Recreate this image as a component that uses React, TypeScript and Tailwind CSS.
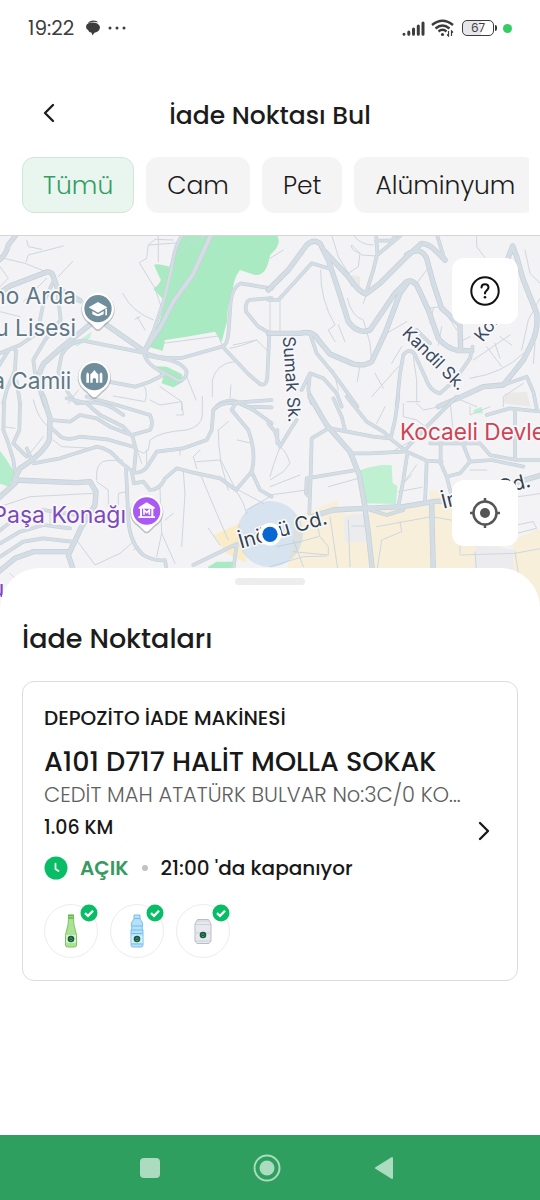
import { ChevronLeft, ChevronRight } from "lucide-react";

const filters = ["Tümü", "Cam", "Pet", "Alüminyum"];

// Streets are drawn per map tile (810 x 540 units), widest first
const tiles = [
  {
    x: 0,
    y: 0,
    wide: [
      "M635 10L578 135L520 215L482 290L432 365",
      "M320 285L430 362",
      "M300 260L190 348L132 400Q112 430 118 470L138 530",
      "M-10 195L30 168L140 126Q156 124 160 140L172 175L240 212",
      "M-10 95Q18 78 25 45L50 12",
    ],
    mid: [
      "M550 10Q522 50 516 110L492 210L462 300L436 355",
      "M430 368L250 332Q205 335 185 375L175 425L205 490L230 520",
      "M430 365Q475 388 545 384L665 350Q684 345 686 300L692 215Q698 170 722 160L815 176",
      "M668 350L745 432L780 462Q800 470 802 440L808 310",
      "M815 204L748 210Q734 218 738 245L775 290L815 312",
      "M432 370Q440 405 492 428L535 452Q560 448 560 425Q550 400 500 388L445 378",
      "M325 455L405 470L450 455L490 435",
      "M162 150L130 220L112 310L60 345L0 370",
      "M172 180L182 270L135 330L100 390L110 470",
      "M-5 410L20 370Q32 345 48 362L45 420L20 480L10 520",
      "M230 520Q300 510 340 535L370 555",
      "M640 540Q660 510 700 512L740 530L815 532",
      "M50 455L60 520",
    ],
    thin: [
      "M12 85L75 100L130 122M218 94L175 140",
      "M80 30L85 50L125 58M78 95L85 75L190 48M0 110L25 145L0 170",
      "M475 15V95M540 38L445 45L440 85L418 98L465 175L485 235M445 45L465 28L520 30",
      "M368 190Q395 245 460 270M412 260L435 300M420 260L405 268",
      "M620 15L560 45L520 85",
      "M490 340L655 318L668 350M560 440L588 510M480 470L545 515V540",
      "M702 395Q650 400 637 450V500M770 330Q720 350 690 355M810 370L770 330L700 345",
      "M693 465L690 505M340 498L435 515Q445 480 430 466M235 480L205 520",
      "M140 145L70 215M0 245L60 260",
    ],
  },
  {
    x: 810,
    y: 0,
    wide: [
      "M-5 180L55 120L110 45Q130 25 150 40L175 90L205 180L235 275Q265 315 300 300L375 190L410 155Q425 148 440 165L475 240L505 325Q530 355 565 362L605 362",
      "M165 65L235 140Q265 185 288 192L330 160L410 80L455 40Q480 42 500 65L525 90",
      "M-5 310H90Q130 300 145 330L180 372L250 402Q280 410 305 395L345 310L390 190L415 155",
      "M505 530L575 500L640 470L700 465L760 390L785 340Q805 300 800 250L760 150L740 80L728 48L712 90",
      "M410 75Q450 45 470 85L490 160L515 235L570 285L572 362",
    ],
    mid: [
      "M-5 210H25L80 150L125 100L175 115",
      "M318 10L322 70L310 120L288 190M322 75L400 10M318 32H365L380 12",
      "M500 12L525 92",
      "M120 310L140 370L190 430L262 530",
      "M380 530L390 430L400 375Q420 350 435 375L465 440Q480 485 510 490L555 450L600 385L608 350",
      "M700 465L770 440L790 485L800 535",
      "M95 480L120 430L160 445L200 490L215 530M120 430L115 480L125 520",
      "M440 300L480 340",
    ],
    thin: [
      "M185 15L205 80L235 130L265 110L270 70Q240 60 245 45L275 75L320 78M250 15Q270 45 310 45",
      "M0 210V310M30 210V305M152 120Q150 210 195 285L175 300L195 335",
      "M232 205Q245 260 280 270L300 340L305 395M205 285L225 335",
      "M620 15V50L650 90M765 60L780 130L810 160M810 205L775 270L755 360",
      "M470 235L515 230L560 300M505 345L515 290",
      "M270 405L262 455M385 410L305 500M340 475L315 430M410 515H450M430 380L440 450V515",
      "M365 400L395 350M650 350L695 410M610 390L720 315M675 340L690 385M725 345L690 320",
      "M795 340L790 400M600 445Q700 430 760 370M700 530V500L760 460",
      "M190 420L205 480M490 235L480 280M350 310L410 275",
      "M280 220L290 190M440 160L470 120M580 330L600 320",
      "M0 85L40 60M560 505L620 530",
    ],
  },
  {
    x: 0,
    y: 510,
    wide: [
      "M130 -10L150 55L148 120Q130 160 60 205L42 240L230 248L270 245L288 275L285 315L245 380L205 465L220 510",
      "M-10 520L45 475L100 455H205",
      "M45 250L-10 300",
    ],
    mid: [
      "M200 -5L260 10L300 45L370 80L398 110L408 150L402 215",
      "M150 60L210 65L240 45L290 55L330 80L395 105L450 90Q462 70 450 45L350 15L260 -10",
      "M155 85L185 112Q210 122 240 110L320 118L400 140",
      "M80 145L100 190L180 175L290 140Q330 145 360 185L402 218Q430 220 445 195L470 155L550 145L620 120L635 90L640 30Q660 5 710 8L815 0",
      "M12 10L10 90L25 130L40 180L45 215",
      "M60 15L58 90L40 130L80 170",
      "M378 205L385 360Q390 430 430 465Q465 485 495 480L500 510",
      "M395 215L402 250L430 245L450 270Q480 270 495 235L530 205L580 218L660 235L708 270L755 215Q770 160 745 90L695 30L710 5",
      "M0 430L60 395L130 375L210 385M0 470L70 425L130 415L215 425",
      "M-5 395L45 355L130 330L260 350",
      "M710 5L760 30L815 70M755 215L780 270L815 290",
      "M580 495L710 432L700 510",
    ],
    thin: [
      "M100 0Q115 60 145 80M10 80L45 85M90 160L130 110M0 320L90 290L280 280",
      "M290 240Q285 185 320 182L368 180M290 245L325 270V320L355 315V280L380 275",
      "M160 120L185 140L280 145M410 150L430 160L445 150L450 120Q480 95 560 90Q605 80 607 45V-10",
      "M450 0L480 15L545 5L550 45H530M600 150L580 170L590 205M590 185L660 180L685 270",
      "M655 90Q655 140 662 180L708 270M655 90L685 65M712 120L755 130M540 150V165",
      "M480 265L485 400L470 470M485 400L525 490M485 395M555 280L550 215M555 280L545 440",
      "M600 220L650 340L685 420M625 385L660 435M708 270L730 310L740 340",
      "M230 420L285 495L360 460L395 430M400 450L415 440M415 160L425 190M520 340L495 360",
      "M440 190V150M150 330V375M810 290L740 330M715 270L790 310",
      "M30 520L50 540",
    ],
  },
  {
    x: 810,
    y: 510,
    wide: [
      "M130 348L190 330L280 325L400 320L490 305L560 300L815 225",
      "M285 325L295 400L308 520",
      "M485 315L490 520",
      "M120 -10L170 75L240 155L268 225L285 320",
    ],
    mid: [
      "M190 -5L215 50L225 90M180 85L310 110L360 115L410 155L470 182L515 185",
      "M230 -10L290 65L340 95L362 115L375 60L385 -10",
      "M175 85L125 115L122 230L118 340M110 235L260 210M110 235L108 280L118 290",
      "M240 160L300 160L400 155L470 80L560 -10",
      "M412 160L400 240L385 320M470 185L465 310",
      "M512 130V190L530 230L545 290",
      "M480 130H630L660 165L740 180L815 180M580 135L600 185L570 220L530 230M600 185L665 180L760 200",
      "M720 25L815 35M735 30V180M720 25L650 45",
      "M-5 70L15 95L30 140L60 90L80 60M22 90V130",
      "M285 325L350 345L400 330",
    ],
    thin: [
      "M0 240L40 215L60 190Q50 155 30 140L12 190L0 230",
      "M0 285L110 270M0 260L90 225M175 260L265 235M385 275L455 262",
      "M440 195L400 250L425 225M345 20L320 70M400 10V50L440 60L480 90M375 150L430 120L490 60",
      "M135 350L150 410L175 440L175 465L70 455M180 350L205 520M0 500L100 470L170 468",
      "M20 440L90 425L145 410M235 360L240 500M245 378H290M320 520L335 420L395 395L390 365",
      "M320 380L485 350L570 365M570 370L570 460",
      "M570 465L735 460L815 445M615 455L620 520M735 455L745 520",
      "M600 20V45L660 20M540 0L550 100",
      "M740 375L790 365L800 385L740 400M745 290L815 280M70 420L100 500",
      "M440 10L460 30L510 20M600 210H650",
    ],
  },
];

const StreetMap = () => (
  <svg
    viewBox="0 18 1620 1122"
    preserveAspectRatio="xMidYMin slice"
    className="block h-full w-full font-['Inter','Liberation_Sans',sans-serif]"
    role="img"
    aria-label="Harita"
  >
    <rect width="1620" height="1140" fill="#f3f2f4" />

    {/* parks */}
    <g fill="#a9eac2">
      <path d="M545 15H830Q850 40 810 75Q800 140 765 135L720 120Q700 145 697 190Q680 230 682 270L665 335L645 305L560 320L495 330L488 362L445 350L480 270L492 210L460 178Q490 150 480 145L462 105Q470 98 508 110L520 70Z" />
      <path d="M455 408L500 410L545 432L550 455L520 472L485 460L490 440Z" />
      <path d="M-5 655L20 690L45 730L28 770L-5 760Z" fill="#b4edcb" />
      <path d="M1078 722Q1130 702 1175 706L1178 760L1192 768L1188 822L1100 820L1088 780Z" fill="#bff0d2" />
      <path d="M625 1010L650 995H700L690 1030H620Z" />
      <path d="M225 340L275 305L270 325L230 350Z" fill="#c9f0d9" />
      <path d="M1420 540L1445 530L1448 550H1422Z" fill="#bff0d2" />
    </g>
    <path d="M1055 135L1080 140V175L1050 170ZM1515 490L1580 485L1592 530L1510 520Z" fill="#ebe9e8" />

    {/* commercial blocks */}
    <g fill="#f8efdb">
      <path d="M890 860L1010 810L1025 850H1100L1110 1030H860Z" />
      <path d="M1110 840L1270 830L1370 845V1030H1120L1105 880Z" />
      <path d="M1290 780L1330 790L1500 820V945L1540 1030H1290Z" />
      <path d="M1540 930L1630 890V1140H1540Z" />
      <path d="M640 915L720 880L740 1000L680 970Z" fill="#fbecc8" />
    </g>
    <path d="M1030 860L1095 850L1100 935H1035ZM1430 940L1540 960V1030H1420Z" fill="#ececee" />

    {tiles.map((tile) => (
      <g key={`${tile.x}-${tile.y}`} transform={`translate(${tile.x} ${tile.y})`} fill="none" strokeLinecap="round" strokeLinejoin="round">
        <path d={tile.thin.join("")} stroke="#ced7df" strokeWidth="3" />
        <path d={tile.mid.join("")} stroke="#c3cfd9" strokeWidth="11" />
        <path d={tile.wide.join("")} stroke="#c3cfd9" strokeWidth="16" />
        <path d={tile.mid.join("")} stroke="#d4dde4" strokeWidth="8" />
        <path d={tile.wide.join("")} stroke="#d4dde4" strokeWidth="12" />
      </g>
    ))}

    {/* accuracy radius */}
    <circle cx="810" cy="912" r="99" fill="#9fc5ea" fillOpacity="0.32" />

    {/* labels */}
    <g strokeLinejoin="round" stroke="#f8f8fa" strokeWidth="10" paintOrder="stroke">
      <g fill="#5f7886" fontSize="68" textAnchor="end">
        <text x="228" y="222">no Arda</text>
        <text x="228" y="318">u Lisesi</text>
        <text x="214" y="476">a Camii</text>
      </g>
      <text x="378" y="878" fill="#7b48bd" fontSize="69" textAnchor="end">Paşa Konağı</text>
      <text x="-28" y="1100" fill="#7b48bd" fontSize="69">u</text>
      <text x="1200" y="629" fill="#cf4354" fontSize="68">Kocaeli Devlet</text>
      <g fill="#3a4a5f" fontSize="52">
        <text transform="translate(848 320) rotate(86)">Sumak Sk.</text>
        <text transform="translate(1204 312) rotate(45)">Kandil Sk.</text>
        <text transform="translate(1448 338) rotate(-52)">Koru</text>
      </g>
      <g fill="#33414f" fontSize="60">
        <text transform="translate(722 956) rotate(-16)">İnönü Cd.</text>
        <text transform="translate(1330 836) rotate(-14)">İnönü Cd.</text>
      </g>
    </g>

    {/* current position */}
    <circle cx="810" cy="913" r="34" fill="#fff" />
    <circle cx="810" cy="913" r="23" fill="#0967d2" />

    {/* places */}
    <g transform="translate(294 236)">
      <Pin color="#6f8d9b" />
      <path d="M-28 -4L0 -20L28 -4L0 12Z M-17 7V17Q0 28 17 17V7L0 17Z M22 0H27V20H22Z" fill="#fff" />
    </g>
    <g transform="translate(283 440)">
      <Pin color="#6f8d9b" />
      <path d="M-24 18V-8L-20 -13L-16 -8V18Z M16 18V-8L20 -13L24 -8V18Z M-12 18V-7Q-7 -10 0 -20Q7 -10 12 -7V18H5V8Q0 0 -5 8V18Z" fill="#fff" />
    </g>
    <g transform="translate(440 843)">
      <Pin color="#aa5af2" />
      <path d="M-24 -11L0 -26L24 -11V-7H-24Z M-20 -7H-14V16H-20Z M14 -7H20V16H14Z M-25 16H25V21H-25Z" fill="#fff" />
      <path d="M-8 11V-3L0 5L8 -3V11" fill="none" stroke="#fff" strokeWidth="5" />
    </g>
  </svg>
);

const Pin = ({ color }: { color: string }) => (
  <>
    <path d="M0 67C-8 67 -14 56 -28 45A50 50 0 1 1 28 45C14 56 8 67 0 67Z" fill="#7d858c" opacity="0.45" />
    <path d="M0 62C-7 62 -13 51 -27 40A48 48 0 1 1 27 40C13 51 7 62 0 62Z" fill="#fff" />
    <circle r="41" fill={color} />
  </>
);

const StatusBar = () => (
  <div className="flex h-14 items-center justify-between px-7 text-[#3c3c3c]">
    <div className="flex items-center gap-3">
      <span className="text-xl">19:22</span>
      <svg width="14" height="16" viewBox="0 0 15 16" fill="currentColor">
        <path d="M2 3Q4 0 8 0Q12 0 13 2Q7 0 2 3ZM0 6Q1 2 7 2Q14 2 15 7Q15 12 9 13L7 16L6 13Q3 13 2 10Q0 9 0 6Z" />
      </svg>
      <svg width="18" height="4" viewBox="0 0 18 4" fill="currentColor" className="-ml-1">
        <circle cx="2" cy="2" r="1.5" />
        <circle cx="9" cy="2" r="1.5" />
        <circle cx="16" cy="2" r="1.5" />
      </svg>
    </div>
    <div className="flex items-center gap-1.5">
      <svg width="23" height="15" viewBox="0 0 23 15" stroke="currentColor" strokeWidth="3" strokeLinecap="round">
        <path d="M2 13.3V13.2M6.8 13.3V11M11.5 13.3V8M16.3 13.3V5M21 13.3V2" />
      </svg>
      <svg width="23" height="18" viewBox="0 0 23 18" fill="none" stroke="currentColor" strokeWidth="2.4">
        <path d="M1 6Q11.500 -2.500 22 6M4.500 9.500Q11.500 3.500 18.500 9.500M7.500 12.500Q11.500 9 15.500 12.500" />
        <circle cx="11.500" cy="15.500" r="1.600" fill="currentColor" stroke="none" />
        <path d="M17.500 12V17L16 15.500M20.500 17V12L22 13.500" strokeWidth="1.200" />
      </svg>
      <div className="ml-0.5 flex items-center gap-px">
        <span className="flex h-4 w-8 items-center justify-center rounded-[5px] border border-current bg-linear-to-r from-gray-200 from-60% to-white to-60% text-xs leading-none">
          67
        </span>
        <span className="h-1.5 w-0.5 rounded-r bg-current" />
      </div>
      <span className="size-[9px] rounded-full bg-[#35cb65]" />
    </div>
  </div>
);

const CheckBadge = () => (
  <svg viewBox="0 0 18 18" className="absolute -top-px -right-px size-[18px]">
    <circle cx="9" cy="9" r="8.500" fill="#08bd66" />
    <path d="M5 9.200L8 11.800L13 6.700" fill="none" stroke="#fff" strokeWidth="2.300" />
  </svg>
);

const Label = ({ y }: { y: number }) => (
  <g transform={`translate(9 ${y})`}>
    <circle r="3.300" fill="#155943" />
    <path d="M-1.600 .5L0 -1.500L1.600 .5M-1.200 1.600H1.300" fill="none" stroke="#4fae72" strokeWidth=".8" />
  </g>
);

const GlassBottle = () => (
  <svg width="18" height="34" viewBox="0 0 18 34">
    <path d="M6.500 1H11.500V5Q11.500 11 13.500 17Q14.500 20 14.500 23V31Q14.500 33 12.500 33H5.500Q3.500 33 3.500 31V23Q3.500 20 4.500 17Q6.500 11 6.500 5Z" fill="#abe394" stroke="#79c561" />
    <path d="M6 1.500H12M6.500 4H11.500" stroke="#62b84b" strokeWidth="1.500" />
    <path d="M4 21H14V29H4Z" fill="#d7f1c9" />
    <Label y={25} />
  </svg>
);

const PlasticBottle = () => (
  <svg width="18" height="34" viewBox="0 0 18 34">
    <path d="M6 1H12V5L14 8Q15 10 14.500 12L14 14L15 16V31Q15 33 13 33H5Q3 33 3 31V16L4 14L3.500 12Q3 10 4 8L6 5Z" fill="#b5e2fb" stroke="#78bfeb" />
    <path d="M6 4.500H12M4 12H14M3.500 16H14.500M3.500 19.500H14.500M4 30H14" stroke="#73baf0" />
    <path d="M3.500 21.500H14.500V29H3.500Z" fill="#d3edfa" />
    <Label y={25} />
  </svg>
);

const Can = () => (
  <svg width="18" height="34" viewBox="0 0 18 34">
    <path d="M3.500 5.500H14.500L17 10V27L15 29.500H3L1 27V10Z" fill="#e7e9ef" stroke="#b9bdc8" />
    <path d="M3 7H15M1.500 10.500H16.500M2 19H16M2 27H16" stroke="#c7cad3" strokeWidth=".8" />
    <Label y={21} />
  </svg>
);

const materials = [
  { name: "Cam", Icon: GlassBottle },
  { name: "Pet", Icon: PlasticBottle },
  { name: "Alüminyum", Icon: Can },
];

const PointCard = () => (
  <article className="mt-6 rounded-xl border border-[#dcdcdc] px-[21px] py-[22px] text-[#181818]">
    <p className="text-xl leading-7 font-medium">DEPOZİTO İADE MAKİNESİ</p>
    <h3 className="mt-3 text-[27px] leading-9 font-medium whitespace-nowrap">A101 D717 HALİT MOLLA SOKAK</h3>
    <div className="flex items-center justify-between">
      <div className="min-w-0">
        <p className="text-[21px] leading-[30px] font-light whitespace-nowrap text-[#606060]">
          CEDİT MAH ATATÜRK BULVAR No:3C/0 KO...
        </p>
        <p className="mt-1 text-[19px] leading-7 font-medium">1.06 KM</p>
        <p className="mt-3 flex items-center text-xl leading-7 font-medium">
          <svg width="24" height="24" viewBox="0 0 24 24" fill="none">
            <circle cx="12" cy="12" r="11.500" fill="#08bd66" />
            <path d="M11.500 7.500V13L14.500 15" stroke="#fff" strokeWidth="1.700" strokeLinecap="round" />
          </svg>
          <span className="ml-3 font-semibold text-[#389a61]">AÇIK</span>
          <span className="mx-[13px] size-1.5 rounded-full bg-[#c2c2c2]" />
          <span>21:00 'da kapanıyor</span>
        </p>
      </div>
      <a href="#" aria-label="Detay" className="-mr-2 p-1">
        <ChevronRight className="size-8" strokeWidth={1.75} />
      </a>
    </div>
    <ul className="mt-[22px] flex gap-3">
      {materials.map(({ name, Icon }) => (
        <li key={name} aria-label={name} className="relative flex size-[54px] items-center justify-center rounded-full border border-[#ececec]">
          <Icon />
          <CheckBadge />
        </li>
      ))}
    </ul>
  </article>
);

const App = () => {
  return (
    <div className="flex min-h-screen flex-col bg-white font-['Poppins','Inter','Liberation_Sans',sans-serif] text-[#1c1c1c]">
      <StatusBar />

      <header className="mt-8 grid h-12 grid-cols-[54px_1fr_54px] items-start px-[22px] pt-2">
        <button type="button" aria-label="Geri" className="flex justify-center pt-px">
          <ChevronLeft className="size-8" strokeWidth={1.75} />
        </button>
        <h1 className="text-center text-[25px] leading-10 font-medium">İade Noktası Bul</h1>
      </header>

      <div className="mt-[21px] mr-[11px] ml-[22px] flex gap-3 overflow-hidden">
        {filters.map((label, i) => (
          <button
            key={label}
            type="button"
            className={`h-14 shrink-0 rounded-xl border px-5 pt-0.5 text-[25px] font-light ${
              i === 0 ? "border-[#cfe7da] bg-[#e9f5ef] text-[#349d64]" : "border-[#f4f4f4] bg-[#f4f4f4]"
            }`}
          >
            {label}
          </button>
        ))}
      </div>

      <div className="relative mt-[22px] h-[375px] border-t border-[#d5d5d7]">
        <StreetMap />
        <div className="absolute top-[22px] right-[22px] flex flex-col gap-[156px]">
          <button type="button" aria-label="Yardım" className="flex size-[66px] items-center justify-center rounded-xl bg-white">
            <svg width="32" height="32" viewBox="0 0 32 32" fill="none" stroke="#111" strokeWidth="2" strokeLinecap="round">
              <circle cx="16" cy="16" r="13.7" />
              <path d="M12.5 12.5C12.5 8 19.500 8 19.500 12.500C19.500 15 16 15.500 16 18.500" />
              <circle cx="16" cy="22.300" r="1.300" fill="#111" stroke="none" />
            </svg>
          </button>
          <button type="button" aria-label="Konumum" className="flex size-[66px] items-center justify-center rounded-xl bg-white">
            <svg width="32" height="32" viewBox="0 0 32 32" fill="none" stroke="#555" strokeWidth="2.500">
              <circle cx="16" cy="16" r="11.500" />
              <circle cx="16" cy="16" r="5" fill="#555" stroke="none" />
              <path d="M16 1V5M16 27V31M1 16H5M27 16H31" />
            </svg>
          </button>
        </div>
      </div>

      <main className="relative -mt-[42px] flex-1 rounded-t-[40px] bg-white px-[22px] pt-2.5 pb-6">
        <div className="mx-auto h-[7px] w-[70px] rounded-full bg-[#ededed]" />
        <h2 className="mt-9 text-[27px] leading-9 font-medium">İade Noktaları</h2>
        <PointCard />
      </main>

      <nav className="flex h-[65px] items-center justify-center bg-[#2f9f60] pr-1.5 text-[#abdcc0]">
        <button type="button" aria-label="Son uygulamalar" className="flex w-[117px] justify-center">
          <span className="size-5 rounded bg-current" />
        </button>
        <button type="button" aria-label="Ana ekran" className="flex w-[117px] justify-center">
          <svg width="28" height="28" viewBox="0 0 28 28">
            <circle cx="14" cy="14" r="12.500" fill="none" stroke="currentColor" strokeWidth="2" />
            <circle cx="14" cy="14" r="7.500" fill="currentColor" />
          </svg>
        </button>
        <button type="button" aria-label="Geri dön" className="flex w-[117px] justify-center">
          <svg width="20" height="24" viewBox="0 0 20 24" fill="currentColor" stroke="currentColor" strokeWidth="2" strokeLinejoin="round">
            <path d="M2 12L18 2V22Z" />
          </svg>
        </button>
      </nav>
    </div>
  );
};

export default App;
